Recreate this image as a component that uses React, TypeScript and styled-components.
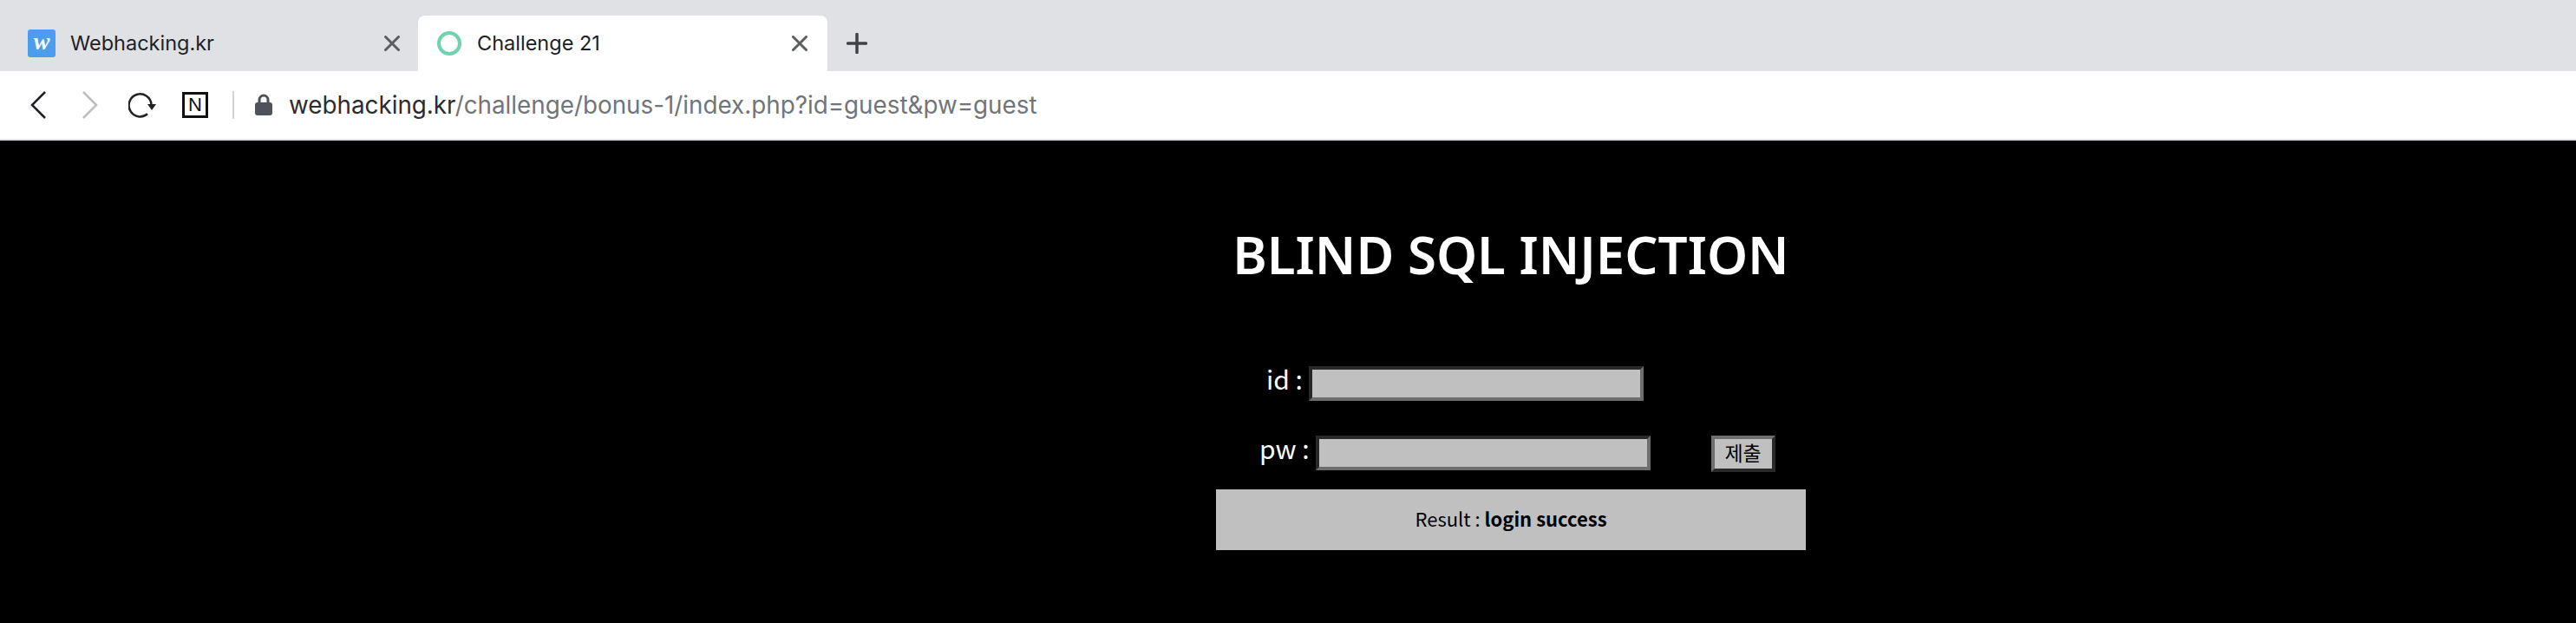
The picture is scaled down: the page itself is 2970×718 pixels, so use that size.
import React from 'react';
import styled, { createGlobalStyle } from 'styled-components';

const GlobalStyle = createGlobalStyle`
  html, body {
    margin: 0;
    padding: 0;
    background: #000000;
  }
`;

const App = () => (
  <Window>
    <GlobalStyle />
    <TabStrip>
      <Tab>
        <Favicon>w</Favicon>
        <TabTitle>Webhacking.kr</TabTitle>
        <CloseIcon />
      </Tab>
      <Tab $active>
        <RingIcon />
        <TabTitle>Challenge 21</TabTitle>
        <CloseIcon />
      </Tab>
      <NewTab>
        <svg width="24" height="24" viewBox="0 0 24 24">
          <path d="M12 1.500v21M1.500 12h21" stroke="#3f4145" strokeWidth="3.5" strokeLinecap="round" />
        </svg>
      </NewTab>
    </TabStrip>
    <AddressBar>
      <NavIcon viewBox="0 0 18 32" $w={18} $left={0}>
        <path d="M17 1L2 16l15 15" stroke="#202124" />
      </NavIcon>
      <NavIcon viewBox="0 0 18 32" $w={18} $left={42}>
        <path d="M1 1l15 15L1 31" stroke="#bdbdbd" />
      </NavIcon>
      <NavIcon viewBox="0 0 32 32" $w={32} $left={35}>
        <path d="M26.500 15A13 13 0 1 0 22 26.300" stroke="#202124" />
        <path d="M22 15h10l-5 7z" fill="#202124" strokeWidth="0" />
      </NavIcon>
      <NotionBox>N</NotionBox>
      <Divider />
      <LockIcon viewBox="0 0 20 26">
        <path d="M5 12V7a5 5 0 0 1 10 0v5" fill="none" stroke="#4f5259" strokeWidth="3" />
        <rect x="0" y="10" width="20" height="15" rx="3" fill="#4f5259" />
      </LockIcon>
      <Url>
        webhacking.kr<UrlPath>/challenge/bonus-1/index.php?id=guest&amp;pw=guest</UrlPath>
      </Url>
    </AddressBar>
    <Page>
      <Panel>
        <Title>BLIND SQL INJECTION</Title>
        <IdRow>
          <FieldLabel>id :</FieldLabel>
          <TextField readOnly />
        </IdRow>
        <PwRow>
          <FieldLabel>pw :</FieldLabel>
          <TextField readOnly />
          <SubmitButton>제출</SubmitButton>
        </PwRow>
        <ResultBox>
          Result : <b>login success</b>
        </ResultBox>
      </Panel>
    </Page>
  </Window>
);

export default App;

const Window = styled.div`
  width: 2970px;
  height: 718px;
  overflow: hidden;
  display: flex;
  flex-direction: column;
  background: #000000;
`;

const TabStrip = styled.div`
  height: 64px;
  padding: 18px 0 0 16px;
  display: flex;
  background: #dfe1e5;
`;

const Tab = styled.div<{ $active?: boolean }>`
  width: ${props => (props.$active ? '472px' : '466px')};
  box-sizing: border-box;
  padding: 0 ${props => (props.$active ? '23px' : '21px')} 0 ${props => (props.$active ? '22px' : '16px')};
  display: flex;
  align-items: center;
  gap: ${props => (props.$active ? '18px' : '17px')};
  border-radius: 8px 8px 0 0;
  background: ${props => (props.$active ? '#ffffff' : 'transparent')};
`;

const Favicon = styled.div`
  width: 32px;
  height: 32px;
  flex: none;
  border-radius: 3px;
  background: #4c9df0;
  color: #ffffff;
  font: italic 700 28px/27px 'Liberation Serif', serif;
  text-align: center;
`;

const RingIcon = styled.div`
  width: 28px;
  height: 28px;
  box-sizing: border-box;
  flex: none;
  border: 4px solid #6fd4ad;
  border-radius: 50%;
`;

const TabTitle = styled.span`
  flex: 1;
  font: 400 23.5px/32px Inter, 'Liberation Sans', sans-serif;
  color: #202124;
`;

const CloseIcon = () => (
  <svg width="18" height="18" viewBox="0 0 18 18">
    <path d="M1.500 1.500l15 15M16.500 1.500l-15 15" stroke="#5b5d61" strokeWidth="3" strokeLinecap="round" />
  </svg>
);

const NewTab = styled.div`
  margin-left: 22px;
  display: flex;
  align-items: center;
`;

const AddressBar = styled.div`
  height: 78px;
  padding-left: 35px;
  display: flex;
  align-items: center;
  background: #ffffff;
  border-bottom: 2px solid #dfe1e5;
`;

const NavIcon = styled.svg<{ $w: number; $left: number }>`
  width: ${props => props.$w}px;
  height: 32px;
  margin-left: ${props => props.$left}px;
  fill: none;
  stroke-width: 2.5px;
`;

const NotionBox = styled.div`
  width: 30px;
  height: 30px;
  box-sizing: border-box;
  margin-left: 30px;
  border: 3px solid #111111;
  font: 400 22px/24px 'Liberation Sans', Arial, sans-serif;
  text-align: center;
  color: #111111;
`;

const Divider = styled.div`
  width: 2px;
  height: 32px;
  margin-left: 28px;
  background: #d0d2d4;
`;

const LockIcon = styled.svg`
  width: 20px;
  height: 26px;
  margin-left: 24px;
`;

const Url = styled.div`
  margin-left: 19px;
  font: 400 27.8px/36px Inter, 'Liberation Sans', sans-serif;
  color: #2b2c2e;
`;

const UrlPath = styled.span`
  color: #70757a;
`;

const Page = styled.div`
  flex: 1;
  padding-left: 1402px;
  background: #000000;
`;

const Panel = styled.div`
  width: 680px;
  display: flex;
  flex-direction: column;
  font-family: 'Noto Sans CJK KR', 'Noto Sans', sans-serif;
`;

const Title = styled.h1`
  margin: 89px 0 0;
  font-family: 'Noto Sans', sans-serif;
  font-size: 60px;
  font-weight: 600;
  line-height: 84px;
  text-align: center;
  color: #ffffff;
`;

const IdRow = styled.div`
  margin-top: 87px;
  padding-left: 58px;
  display: flex;
  align-items: flex-start;
  gap: 7px;
`;

const PwRow = styled.div`
  margin-top: 40px;
  padding-left: 50px;
  display: flex;
  align-items: flex-start;
  gap: 7px;
`;

const FieldLabel = styled.label`
  font-size: 30px;
  line-height: 28px;
  color: #ffffff;
`;

const TextField = styled.input`
  width: 386px;
  height: 40px;
  box-sizing: border-box;
  padding: 0;
  border: 4px solid;
  border-color: #292929 #6e6e6e #6e6e6e #292929;
  background: #c0c0c0;
  outline: none;
`;

const SubmitButton = styled.button`
  width: 74px;
  height: 42px;
  box-sizing: border-box;
  margin-left: 63px;
  padding: 0 0 3px;
  border: 4px solid;
  border-color: #6e6e6e #292929 #292929 #6e6e6e;
  background: #c0c0c0;
  font: 400 23px/27px 'Noto Sans CJK KR', sans-serif;
  color: #000000;
`;

const ResultBox = styled.div`
  height: 70px;
  margin-top: 20px;
  background: #c0c0c0;
  font-size: 22px;
  line-height: 66px;
  text-align: center;
  color: #000000;
`;
